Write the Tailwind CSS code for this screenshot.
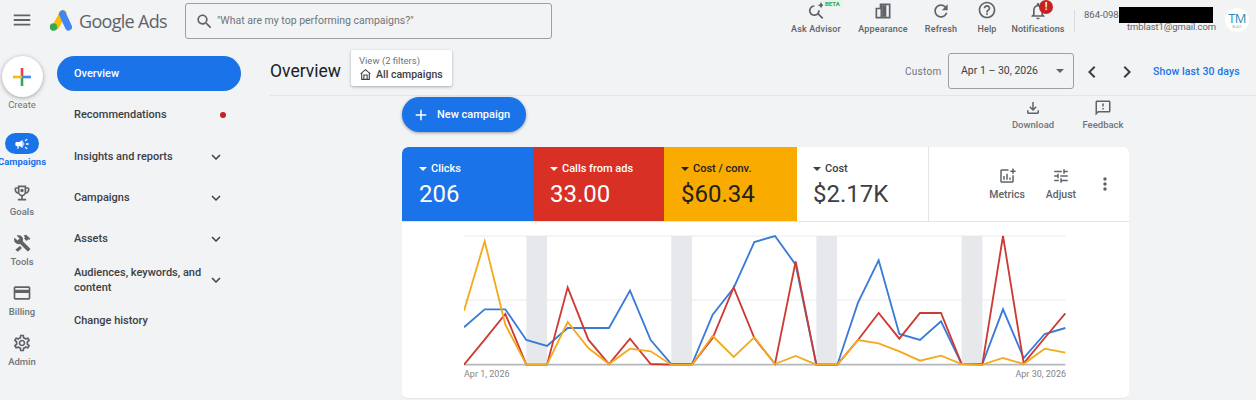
<!DOCTYPE html>
<html><head><meta charset="utf-8"><script src="https://cdn.jsdelivr.net/npm/@tailwindcss/browser@4"></script></head>
<body class="m-0 h-[400px] w-[1256px] overflow-hidden bg-[#f1f3f5] font-[Roboto,sans-serif] text-[#3c4043]">
<header class="flex h-[48px] items-start">
  <svg class="ml-[11px] mt-[9px] h-[22px] w-[22px] fill-[#5f6368]" viewBox="0 0 24 24"><path d="M3 18h18v-2H3v2zm0-5h18v-2H3v2zm0-7v2h18V6H3z"/></svg>
  <svg class="ml-[15px] mt-[10px] h-[22px] w-[24px]" viewBox="0 0 24 22"><path d="M15 3.500 L8 16" stroke="#fbbc04" stroke-width="7" stroke-linecap="round" fill="none"/><path d="M14.500 4 L20.500 17" stroke="#4285f4" stroke-width="7" stroke-linecap="round" fill="none"/><circle cx="5.500" cy="17" r="3.700" fill="#34a853"/></svg>
  <span class="ml-[7px] mt-[8px] w-[87px] whitespace-nowrap font-['Open_Sans'] text-[18px] leading-[26px] tracking-[-0.7px] text-[#5f6368]">Google Ads</span>
  <div class="ml-[19px] mt-[3px] flex h-[36px] w-[367px] items-center rounded-[3px] border border-[#9aa0a6]">
    <svg class="ml-[9px] h-[19px] w-[19px] fill-[#5f6368]" viewBox="0 0 24 24"><path d="M15.500 14h-.79l-.28-.27C15.410 12.590 16 11.110 16 9.500 16 5.910 13.090 3 9.500 3S3 5.910 3 9.500 5.910 16 9.500 16c1.610 0 3.090-.59 4.230-1.570l.27.28v.79l5 4.990L20.490 19l-4.990-5zm-6 0C7.010 14 5 11.990 5 9.500S7.010 5 9.500 5 14 7.010 14 9.500 11.990 14 9.500 14z"/></svg>
    <span class="ml-[3px] whitespace-nowrap text-[10.500px] text-[#70757a]">"What are my top performing campaigns?"</span>
  </div>
  <div class="ml-[229px] flex h-[36px] w-[70px] flex-col items-center">
    <div class="relative mt-[1px] h-[20px]">
      <svg class="h-[20px] w-[20px] fill-[#5f6368]" viewBox="0 0 24 24"><path d="M10 5a6.500 6.500 0 1 0 4.100 11.500l5.200 5.200 1.500-1.500-5.200-5.200A6.500 6.500 0 0 0 16.500 11h-2A4.500 4.500 0 1 1 10 7z"/><path d="M18 1l1.200 2.800L22 5l-2.800 1.200L18 9l-1.200-2.800L14 5l2.800-1.200z"/></svg>
      <span class="absolute left-[17px] top-[-1px] rounded-[1px] bg-[#e6f4ea] px-[2px] text-[6px] font-bold leading-[7px] text-[#34a853]">BETA</span>
    </div>
    <span class="mt-[2px] whitespace-nowrap text-[9px] font-medium leading-[12px] tracking-[0.15px] text-[#5f6368]">Ask Advisor</span>
  </div>
  <div class="ml-[-3px] flex h-[36px] w-[70px] flex-col items-center">
    <svg class="mt-[1px] h-[20px] w-[20px] fill-[#5f6368]" viewBox="0 0 24 24"><path d="M3 8h5V3h13v18H3zm2 2v9h4v-9zm6-5v14h8V5z"/><path d="M11 5h5v14h-5z"/></svg>
    <span class="mt-[2px] whitespace-nowrap text-[9px] font-medium leading-[12px] tracking-[0.15px] text-[#5f6368]">Appearance</span>
  </div>
  <div class="ml-[-12px] flex h-[36px] w-[70px] flex-col items-center">
    <svg class="mt-[1px] h-[20px] w-[20px] fill-[#5f6368]" viewBox="0 0 24 24"><path d="M17.650 6.350C16.200 4.900 14.210 4 12 4c-4.420 0-7.990 3.580-7.990 8s3.570 8 7.990 8c3.730 0 6.840-2.550 7.730-6h-2.080c-.82 2.330-3.040 4-5.650 4-3.310 0-6-2.690-6-6s2.690-6 6-6c1.660 0 3.140.69 4.220 1.780L13 11h7V4l-2.350 2.350z"/></svg>
    <span class="mt-[2px] whitespace-nowrap text-[9px] font-medium leading-[12px] tracking-[0.15px] text-[#5f6368]">Refresh</span>
  </div>
  <div class="ml-[-24px] flex h-[36px] w-[70px] flex-col items-center">
    <svg class="h-[20px] w-[20px] fill-[#5f6368]" viewBox="0 0 24 24"><path d="M11 18h2v-2h-2v2zm1-16C6.480 2 2 6.480 2 12s4.480 10 10 10 10-4.480 10-10S17.520 2 12 2zm0 18c-4.410 0-8-3.590-8-8s3.590-8 8-8 8 3.590 8 8-3.590 8-8 8zm0-14c-2.210 0-4 1.790-4 4h2c0-1.100.9-2 2-2s2 .9 2 2c0 2-3 1.750-3 5h2c0-2.250 3-2.500 3-5 0-2.210-1.790-4-4-4z"/></svg>
    <span class="mt-[3px] whitespace-nowrap text-[9px] font-medium leading-[12px] tracking-[0.15px] text-[#5f6368]">Help</span>
  </div>
  <div class="ml-[-19px] flex h-[36px] w-[70px] flex-col items-center">
    <div class="relative mt-[1px] h-[20px]">
      <svg class="h-[20px] w-[20px] fill-[#5f6368]" viewBox="0 0 24 24"><path d="M12 22c1.100 0 2-.9 2-2h-4c0 1.100.9 2 2 2zm6-6v-5c0-3.070-1.630-5.640-4.500-6.320V4c0-.83-.67-1.500-1.500-1.500s-1.500.67-1.500 1.500v.68C7.640 5.360 6 7.920 6 11v5l-2 2v1h16v-1l-2-2zm-2 1H8v-6c0-2.480 1.510-4.500 4-4.500s4 2.020 4 4.500v6z"/></svg>
      <span class="absolute left-[11px] top-[-1px] flex h-[14px] w-[14px] items-center justify-center rounded-full bg-[#c5221f] text-[10px] font-bold leading-none text-white">!</span>
    </div>
    <span class="mt-[2px] whitespace-nowrap text-[9px] font-medium leading-[12px] tracking-[0.1px] text-[#5f6368]">Notifications</span>
  </div>
  <div class="ml-[1px] mt-[10px] h-[22px] w-px bg-[#dadce0]"></div>
  <div class="ml-[9px] mt-[7px] h-[28px] w-[132px] text-[9.500px] leading-[12px] text-[#5f6368]">
    <div class="flex h-[16px] items-center"><span class="whitespace-nowrap">864-098-</span><span class="ml-[-2px] h-[16px] w-[94px] bg-black"></span></div>
    <div class="mt-[-3px] h-[14px] pt-[1px] text-right tracking-[-0.1px]">tmblast1@gmail.com</div>
  </div>
  <div class="ml-[9px] mt-[8px] flex h-[24px] w-[24px] flex-col items-center justify-center rounded-full bg-white">
    <span class="font-['Open_Sans'] text-[13px] leading-[13px] tracking-[-0.8px] text-[#2a8fb5]">TM</span>
    <span class="mt-[1px] text-[3px] leading-[3px] text-[#9aa0a6]">BLAST</span>
  </div>
</header>
<div class="flex h-[352px]">
  <aside class="flex w-[44px] shrink-0 flex-col items-center">
    <div class="mt-[8px] flex h-[41px] w-[41px] items-center justify-center rounded-full bg-white shadow-[0_1px_4px_rgba(60,64,67,0.45)]">
      <svg class="h-[20px] w-[20px]" viewBox="0 0 20 20"><rect x="8.700" y="1" width="2.600" height="9" fill="#ea4335"/><rect x="10" y="8.700" width="9" height="2.600" fill="#4285f4"/><rect x="8.700" y="10" width="2.600" height="9" fill="#34a853"/><rect x="1" y="8.700" width="9" height="2.600" fill="#fbbc04"/></svg>
    </div>
    <span class="mt-[2px] h-[34px] text-[9.500px] leading-[12px] text-[#70757a]">Create</span>
    <div class="flex h-[50px] flex-col items-center">
      <div class="flex h-[21px] w-[34px] items-center justify-center rounded-full bg-[#1a73e8]"><svg class="h-[16px] w-[16px] fill-white" viewBox="0 0 24 24"><path d="M18 11v2h4v-2h-4zm-2 6.610c.96.71 2.210 1.650 3.200 2.390.4-.53.8-1.070 1.200-1.600-.99-.74-2.240-1.680-3.200-2.400-.4.54-.8 1.080-1.200 1.610zM20.400 5.600c-.4-.53-.8-1.070-1.200-1.600-.99.74-2.240 1.680-3.200 2.400.4.53.8 1.070 1.200 1.600.96-.72 2.210-1.650 3.200-2.400zM4 9c-1.100 0-2 .9-2 2v2c0 1.100.9 2 2 2h1v4h2v-4h1l5 3V6L8 9H4zm11.500 3c0-1.330-.58-2.530-1.500-3.350v6.690c.92-.81 1.500-2.010 1.500-3.340z"/></svg></div>
      <span class="mt-[2px] whitespace-nowrap text-[9.500px] font-bold leading-[12px] text-[#1a73e8]">Campaigns</span>
    </div>
    <div class="flex h-[50px] flex-col items-center">
      <svg class="h-[20px] w-[20px] fill-[#5f6368]" viewBox="0 0 24 24"><path d="M19 5h-2V3H7v2H5c-1.100 0-2 .9-2 2v1c0 2.550 1.920 4.630 4.390 4.940.63 1.500 1.980 2.630 3.610 2.960V19H7v2h10v-2h-4v-3.100c1.630-.33 2.980-1.460 3.610-2.960C19.080 12.630 21 10.550 21 8V7c0-1.100-.9-2-2-2zM5 8V7h2v3.820C5.840 10.400 5 9.300 5 8zm14 0c0 1.300-.84 2.400-2 2.820V7h2v1z"/><path d="M9 5h6v6a3 3 0 0 1-6 0z" fill="#f1f3f5"/><circle cx="12" cy="9" r="2"/></svg>
      <span class="mt-[3px] text-[9.500px] font-medium leading-[12px] text-[#70757a]">Goals</span>
    </div>
    <div class="flex h-[50px] flex-col items-center">
      <svg class="h-[20px] w-[20px] fill-[#5f6368]" viewBox="0 0 24 24"><path d="M21.700 18.600l-8.700-8.700c.7-1.900.3-4.200-1.300-5.700C10 2.500 7.500 2.200 5.500 3.100l3.600 3.600-2.400 2.400L3 5.600c-1 2-.6 4.500 1.100 6.200 1.500 1.500 3.800 2 5.700 1.300l8.700 8.700c.3.3.8.3 1.100 0l2.100-2.100c.3-.4.3-.8 0-1.100z"/><path d="M14 3l3-1 5 5-1.500 1.500-1-1-2 2-3-3 1-1.500zM9.500 15.500l2.500 2.500-5 4.500L4 20z"/></svg>
      <span class="mt-[3px] text-[9.500px] font-medium leading-[12px] text-[#70757a]">Tools</span>
    </div>
    <div class="flex h-[50px] flex-col items-center">
      <svg class="h-[20px] w-[20px] fill-[#5f6368]" viewBox="0 0 24 24"><path d="M20 4H4c-1.110 0-1.990.89-1.990 2L2 18c0 1.110.89 2 2 2h16c1.110 0 2-.89 2-2V6c0-1.110-.89-2-2-2zm0 14H4v-6h16v6zm0-10H4V6h16v2z"/></svg>
      <span class="mt-[3px] text-[9.500px] font-medium leading-[12px] text-[#70757a]">Billing</span>
    </div>
    <div class="flex h-[50px] flex-col items-center">
      <svg class="h-[20px] w-[20px] fill-[#5f6368]" viewBox="0 0 24 24"><path d="M19.430 12.980c.04-.32.07-.64.07-.98 0-.34-.03-.66-.07-.98l2.110-1.650c.19-.15.24-.42.12-.64l-2-3.460c-.09-.16-.26-.25-.44-.25-.06 0-.12.01-.17.03l-2.490 1c-.52-.4-1.080-.73-1.690-.98l-.38-2.650C14.460 2.180 14.250 2 14 2h-4c-.25 0-.46.18-.49.42l-.38 2.650c-.61.25-1.170.59-1.690.98l-2.490-1c-.06-.02-.12-.03-.18-.03-.17 0-.34.09-.43.25l-2 3.460c-.13.22-.07.49.12.64l2.110 1.650c-.04.32-.07.65-.07.98 0 .33.03.66.07.98l-2.110 1.650c-.19.15-.24.42-.12.64l2 3.460c.09.16.26.25.44.25.06 0 .12-.01.17-.03l2.490-1c.52.4 1.080.73 1.690.98l.38 2.650c.03.24.24.42.49.42h4c.25 0 .46-.18.49-.42l.38-2.650c.61-.25 1.170-.59 1.690-.98l2.490 1c.06.02.12.03.18.03.17 0 .34-.09.43-.25l2-3.460c.12-.22.07-.49-.12-.64l-2.110-1.650zm-1.980-1.710c.04.31.05.52.05.73 0 .21-.02.43-.05.73l-.14 1.130.89.7 1.080.84-.7 1.210-1.270-.51-1.040-.42-.9.68c-.43.32-.84.56-1.250.73l-1.060.43-.16 1.130-.2 1.350h-1.400l-.19-1.350-.16-1.130-1.060-.43c-.43-.18-.83-.41-1.230-.71l-.91-.7-1.060.43-1.270.51-.7-1.210 1.080-.84.89-.7-.14-1.130c-.03-.31-.05-.54-.05-.74s.02-.43.05-.73l.14-1.130-.89-.7-1.080-.84.7-1.210 1.270.51 1.040.42.9-.68c.43-.32.84-.56 1.250-.73l1.060-.43.16-1.130.2-1.350h1.390l.19 1.350.16 1.130 1.060.43c.43.18.83.41 1.230.71l.91.7 1.060-.43 1.270-.51.7 1.210-1.070.85-.89.7.14 1.130zM12 8c-2.210 0-4 1.790-4 4s1.790 4 4 4 4-1.790 4-4-1.790-4-4-4zm0 6c-1.100 0-2-.9-2-2s.9-2 2-2 2 .9 2 2-.9 2-2 2z"/></svg>
      <span class="mt-[3px] text-[9.500px] font-medium leading-[12px] text-[#70757a]">Admin</span>
    </div>
  </aside>
  <nav class="w-[226px] shrink-0 pl-[13px] pt-[8px]">
    <div class="flex h-[35px] w-[184px] items-center rounded-full bg-[#1a73e8] pl-[17px] pt-[1px] text-[11px] font-medium text-white">Overview</div>
    <div class="mb-[1px] mt-[3px] flex h-[41px] w-[184px] items-center justify-between pl-[17px] pr-[15px] pt-[1px] text-[11px] font-medium"><span>Recommendations</span><span class="h-[6px] w-[6px] rounded-full bg-[#c5221f]"></span></div>
    <div class="flex h-[41px] w-[184px] items-center justify-between pl-[17px] pr-[16px] text-[11px] font-medium"><span class="pt-[1px]">Insights and reports</span><svg class="h-[18px] w-[18px] fill-[#3c4043]" viewBox="0 0 24 24"><path d="M16.590 8.590L12 13.170 7.410 8.590 6 10l6 6 6-6z"/></svg></div>
    <div class="flex h-[41px] w-[184px] items-center justify-between pl-[17px] pr-[16px] text-[11px] font-medium"><span class="pt-[1px]">Campaigns</span><svg class="h-[18px] w-[18px] fill-[#3c4043]" viewBox="0 0 24 24"><path d="M16.590 8.590L12 13.170 7.410 8.590 6 10l6 6 6-6z"/></svg></div>
    <div class="flex h-[41px] w-[184px] items-center justify-between pl-[17px] pr-[16px] text-[11px] font-medium"><span class="pt-[1px]">Assets</span><svg class="h-[18px] w-[18px] fill-[#3c4043]" viewBox="0 0 24 24"><path d="M16.590 8.590L12 13.170 7.410 8.590 6 10l6 6 6-6z"/></svg></div>
    <div class="flex h-[41px] w-[184px] items-center justify-between pl-[17px] pr-[16px] text-[11px] font-medium leading-[15px]"><span class="w-[132px]">Audiences, keywords, and content</span><svg class="h-[18px] w-[18px] fill-[#3c4043]" viewBox="0 0 24 24"><path d="M16.590 8.590L12 13.170 7.410 8.590 6 10l6 6 6-6z"/></svg></div>
    <div class="flex h-[41px] w-[184px] items-center pl-[17px] pt-[1px] text-[11px] font-medium"><span>Change history</span></div>
  </nav>
  <main class="flex-1">
    <div class="flex h-[48px] items-center border-b border-[#e3e5e8]">
      <h1 class="w-[70px] whitespace-nowrap text-[17.500px] font-normal text-[#202124]">Overview</h1>
      <div class="ml-[11px] mt-[-7px] h-[36px] w-[101px] rounded-[2px] bg-white pl-[8px] pt-[5px] shadow-[0_1px_3px_rgba(60,64,67,0.4)]">
        <div class="text-[9.500px] leading-[12px] text-[#70757a]">View (2 filters)</div>
        <div class="flex h-[15px] items-center whitespace-nowrap text-[10.500px] font-medium"><svg class="mr-[4px] h-[13px] w-[13px] fill-none stroke-[#3c4043] stroke-2" viewBox="0 0 24 24"><path d="M3 11L12 3l9 8M5 10v11h14V10M9 21v-8h6v8"/></svg>All campaigns</div>
      </div>
      <span class="ml-[453px] mt-[-1px] w-[37px] whitespace-nowrap text-[10px] tracking-[0.3px] text-[#70757a]">Custom</span>
      <div class="ml-[6px] mt-[-1px] flex h-[36px] w-[126px] items-center rounded-[3px] border border-[#9aa0a6] pl-[12px]"><span class="w-[78px] whitespace-nowrap text-[10.500px] text-[#3c4043]">Apr 1 – 30, 2026</span><span class="ml-[17px] h-0 w-0 border-x-[4px] border-t-[4px] border-x-transparent border-t-[#5f6368]"></span></div>
      <svg class="ml-[6px] h-[24px] w-[24px] fill-[#3c4043]" viewBox="0 0 24 24"><path d="M15.410 7.410L14 6l-6 6 6 6 1.410-1.410L10.830 12z"/></svg>
      <svg class="ml-[11px] h-[24px] w-[24px] fill-[#3c4043]" viewBox="0 0 24 24"><path d="M10 6L8.590 7.410 13.170 12l-4.580 4.590L10 18l6-6z"/></svg>
      <span class="ml-[14px] whitespace-nowrap text-[10.500px] font-medium tracking-[0.1px] text-[#1a73e8]">Show last 30 days</span>
    </div>
    <div class="flex h-[51px] items-start">
      <button class="ml-[132px] mt-[1px] flex h-[35px] w-[124px] items-center rounded-full bg-[#1a73e8] pl-[10px] pt-[1px] text-[11px] font-medium text-white shadow-[0_1px_3px_rgba(60,64,67,0.5)]"><svg class="mr-[7px] h-[18px] w-[18px] fill-white" viewBox="0 0 24 24"><path d="M19 13h-6v6h-2v-6H5v-2h6V5h2v6h6v2z"/></svg>New campaign</button>
      <div class="ml-[472px] flex w-[70px] flex-col items-center pt-[3px]">
        <svg class="h-[18px] w-[18px] fill-[#5f6368]" viewBox="0 0 24 24"><path d="M18 15v3H6v-3H4v3c0 1.100.9 2 2 2h12c1.100 0 2-.9 2-2v-3h-2zm-1-4l-1.410-1.410L13 12.170V4h-2v8.170L8.410 9.590 7 11l5 5 5-5z"/></svg>
        <span class="mt-[2px] text-[9.500px] font-medium leading-[12px] text-[#70757a]">Download</span>
      </div>
      <div class="flex w-[70px] flex-col items-center pt-[3px]">
        <svg class="h-[18px] w-[18px] fill-[#5f6368]" viewBox="0 0 24 24"><path d="M20 2H4c-1.100 0-1.990.9-1.990 2L2 22l4-4h14c1.100 0 2-.9 2-2V4c0-1.100-.9-2-2-2zm0 14H5.170L4 17.170V4h16v12zm-9-4h2v2h-2zm0-6h2v4h-2z"/></svg>
        <span class="mt-[2px] text-[9.500px] font-medium leading-[12px] text-[#70757a]">Feedback</span>
      </div>
    </div>
    <section class="ml-[132px] h-[252px] w-[727px] overflow-hidden rounded-[6px] border-b border-[#e3e5e8] bg-white">
      <div class="flex h-[75px] border-b border-[#e3e5e8]">
        <div class="h-[74px] w-[131px] rounded-tl-[6px] bg-[#1a73e8] pl-[17px] pt-[15px] text-white">
          <div class="flex h-[14px] items-center text-[11px] font-medium"><span class="mr-[4px] h-0 w-0 border-x-[4px] border-t-[4px] border-x-transparent border-t-white"></span>Clicks</div>
          <div class="mt-[4px] text-[24px] leading-[28px]">206</div>
        </div>
        <div class="h-[74px] w-[131px] bg-[#d93025] pl-[17px] pt-[15px] text-white">
          <div class="flex h-[14px] items-center text-[11px] font-medium"><span class="mr-[4px] h-0 w-0 border-x-[4px] border-t-[4px] border-x-transparent border-t-white"></span>Calls from ads</div>
          <div class="mt-[4px] text-[24px] leading-[28px]">33.00</div>
        </div>
        <div class="h-[74px] w-[133px] bg-[#f9ab00] pl-[17px] pt-[15px] text-[#202124]">
          <div class="flex h-[14px] items-center text-[11px] font-medium"><span class="mr-[4px] h-0 w-0 border-x-[4px] border-t-[4px] border-x-transparent border-t-[#202124]"></span>Cost / conv.</div>
          <div class="mt-[4px] text-[24px] leading-[28px]">$60.34</div>
        </div>
        <div class="h-[74px] w-[132px] border-r border-[#e3e5e8] pl-[16px] pt-[15px] text-[#3c4043]">
          <div class="flex h-[14px] items-center text-[11px] font-medium"><span class="mr-[4px] h-0 w-0 border-x-[4px] border-t-[4px] border-x-transparent border-t-[#3c4043]"></span>Cost</div>
          <div class="mt-[4px] text-[24px] leading-[28px]">$2.17K</div>
        </div>
        <div class="flex flex-1 items-start">
          <div class="ml-[48px] mt-[20px] flex w-[60px] flex-col items-center"><svg class="h-[18px] w-[18px] fill-[#5f6368]" viewBox="0 0 24 24"><path d="M19 19H5V5h9V3H5c-1.100 0-2 .9-2 2v14c0 1.100.9 2 2 2h14c1.100 0 2-.9 2-2v-8h-2v8z"/><path d="M7 12h2v5H7zM11 9h2v8h-2zM15 14h2v3h-2zM19 2h2v2.500h2.500v2H21V9h-2V6.500h-2.500v-2H19z"/></svg><span class="mt-[3px] text-[10.500px] font-medium leading-[13px] text-[#5f6368]">Metrics</span></div>
          <div class="ml-[-6px] mt-[20px] flex w-[60px] flex-col items-center"><svg class="h-[18px] w-[18px] fill-[#5f6368]" viewBox="0 0 24 24"><path d="M3 17v2h6v-2H3zM3 5v2h10V5H3zm10 16v-2h8v-2h-8v-2h-2v6h2zM7 9v2H3v2h4v2h2V9H7zm14 4v-2H11v2h10zm-6-4h2V7h4V5h-4V3h-2v6z"/></svg><span class="mt-[3px] text-[10.500px] font-medium leading-[13px] text-[#5f6368]">Adjust</span></div>
          <svg class="ml-[4px] mt-[27px] h-[20px] w-[20px] fill-[#5f6368]" viewBox="0 0 24 24"><path d="M12 8c1.100 0 2-.9 2-2s-.9-2-2-2-2 .9-2 2 .9 2 2 2zm0 2c-1.100 0-2 .9-2 2s.9 2 2 2 2-.9 2-2-.9-2-2-2zm0 6c-1.100 0-2 .9-2 2s.9 2 2 2 2-.9 2-2-.9-2-2-2z"/></svg>
        </div>
      </div>
      <svg class="ml-[62px] mt-[13px] block h-[132px] w-[602px]" viewBox="0 31 1806 396" fill="none">
        <path d="M0 34H1804M0 226H1804" stroke="#e8eaed" stroke-width="3"/>
        <path d="M187 34h62v386h-62zM622 34h62v386h-62zM1057 34h62v386h-62zM1493 34h62v386h-62z" fill="#e6e8eb"/>
        <path d="M0 420H1804" stroke="#b5b7ba" stroke-width="5"/>
        <polyline stroke="#3a7bd8" stroke-width="5.500" points="0,308 62,254 124,254 187,346 249,364 311,310 373,310 435,310 498,198 560,346 622,418 684,418 746,270 809,190 871,52 933,34 995,120 1057,420 1120,420 1182,234 1244,107 1306,328 1368,346 1431,290 1493,418 1555,418 1617,254 1679,400 1742,328 1804,310"/>
        <polyline stroke="#cc3a32" stroke-width="5.500" points="0,420 62,345 124,268 187,420 249,420 311,188 373,345 435,418 498,342 560,418 622,420 684,420 746,340 809,188 871,340 933,418 995,110 1057,420 1120,420 1182,346 1244,265 1306,342 1368,265 1431,265 1493,418 1555,420 1617,34 1679,416 1742,340 1804,266"/>
        <polyline stroke="#f3aa1c" stroke-width="5.500" points="0,258 62,50 124,300 187,420 249,420 311,292 373,370 435,418 498,372 560,380 622,420 684,420 746,334 809,397 871,338 933,418 995,394 1057,420 1120,420 1182,346 1244,356 1306,380 1368,408 1431,393 1493,418 1555,420 1617,400 1679,418 1742,372 1804,384"/>
      </svg>
      <div class="ml-[62px] mt-[1px] flex w-[602px] justify-between text-[9px] leading-[12px] text-[#80868b]"><span>Apr 1, 2026</span><span>Apr 30, 2026</span></div>
    </section>
  </main>
</div>
</body></html>
